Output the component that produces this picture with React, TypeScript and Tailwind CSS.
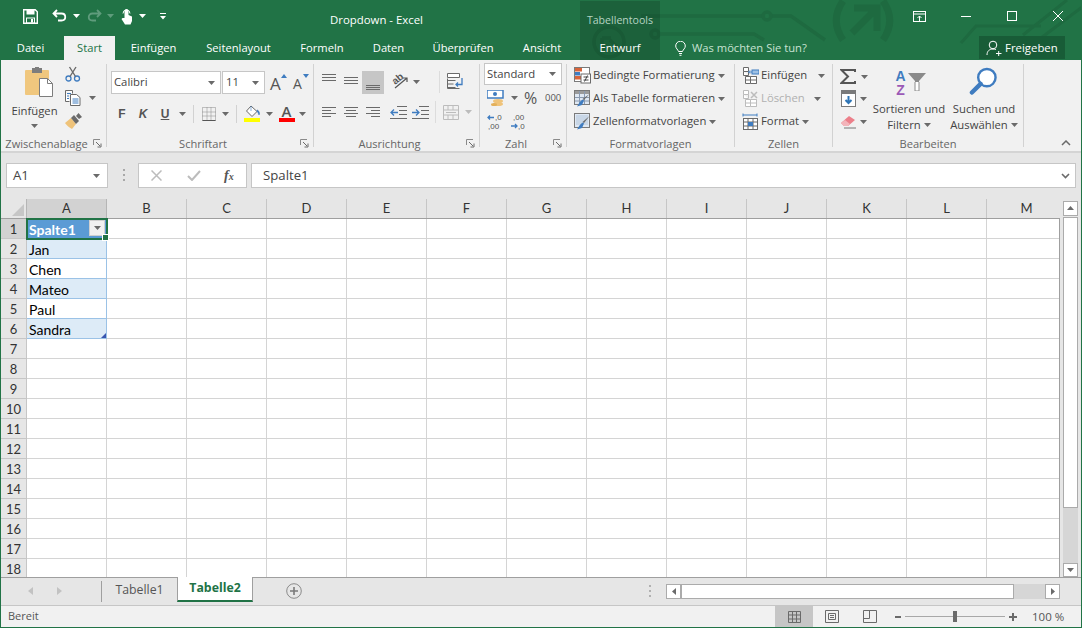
import React from "react";

const Caret = ({ c = "#6a6a6a", className = "" }: { c?: string; className?: string }) => (
  <svg width="7" height="4" viewBox="0 0 7 4" className={"shrink-0 " + className}><path d="M0 0h7L3.5 4z" fill={c} /></svg>
);

const Launcher = () => (
  <svg width="9" height="9" viewBox="0 0 9 9" className="shrink-0">
    <path d="M.5 6V.5H7" fill="none" stroke="#8a8a8a" />
    <path d="M3 3l4 4M8 4.5V8H4.5" fill="none" stroke="#6a6a6a" />
  </svg>
);

const Lines = ({ rows }: { rows: [number, number, number][] }) => (
  <svg width="14" height="14" viewBox="0 0 14 14" className="shrink-0">
    {rows.map(([x, y, l], i) => (
      <rect key={i} x={x} y={y} width={l} height="1" fill="#6a6a6a" />
    ))}
  </svg>
);

function Group({ w, label, launcher, children }: { w: string; label: string; launcher?: boolean; children: React.ReactNode }) {
  return (
    <div className={w + " shrink-0 h-full flex flex-col border-r border-[#d2d2d2]"}>
      <div className="h-[73px] shrink-0">{children}</div>
      <div className={(launcher ? "pr-[14px] " : "") + "relative h-[11px] pt-[2px] flex items-center justify-center text-[11.1px] leading-none text-[#666] whitespace-nowrap"}>
        {label}
        {launcher && <span className="absolute right-[4px] top-[2px] flex"><Launcher /></span>}
      </div>
    </div>
  );
}

const StyleIcon = ({ kind }: { kind: number }) => (
  <svg width="17" height="17" viewBox="0 0 17 17" className="shrink-0">
    {kind === 0 && (
      <>
        <rect x=".5" y=".5" width="15" height="14" fill="#fff" stroke="#7a7a7a" />
        <rect x="1" y="1" width="7" height="3.5" fill="#d9643a" />
        <rect x="1" y="5" width="5" height="3.5" fill="#3f7cc0" />
        <rect x="1" y="9" width="7" height="3.5" fill="#d9643a" />
        <rect x="7" y="7" width="9.5" height="9" fill="#fff" stroke="#6a6a6a" />
        <path d="M9.5 10h5M9.5 13h5M13.5 8.5l-3 6" stroke="#444" fill="none" />
      </>
    )}
    {kind === 1 && (
      <>
        <rect x=".5" y=".5" width="15" height="14" fill="#dfe8f3" stroke="#7a7a7a" />
        <rect x="1" y="1" width="14" height="3" fill="#9a9a9a" />
        <path d="M5.5 1v13M10.5 1v13M1 7.5h14M1 11h14" stroke="#8a9ab0" />
        <path d="M15.5 4L10 10l-1.5-1z" fill="#6a6a6a" />
        <path d="M9 9.5l1 1-2 4.500-5 1.500c1.500-1.500 2-5 6-7z" fill="#3f7cc0" />
      </>
    )}
    {kind === 2 && (
      <>
        <rect x=".5" y=".5" width="15" height="14" fill="#dfe8f3" stroke="#7a7a7a" />
        <rect x="2" y="2" width="12" height="10" fill="#c8d6e6" />
        <path d="M15.500 3L10 10l-1.500-1z" fill="#6a6a6a" />
        <path d="M9 9.500l1 1-2 4.500-5 1.500c1.500-1.500 2-5 6-7z" fill="#3f7cc0" />
      </>
    )}
  </svg>
);

const CellIcon = ({ kind }: { kind: number }) => {
  const c = kind === 1 ? "#bcbcbc" : "#6a6a6a";
  return (
    <svg width="17" height="17" viewBox="0 0 17 17" className="shrink-0">
      {kind === 2 ? (
        <>
          <path d="M1 .5v3M15 .5v3M1 2h14" stroke="#3f7cc0" fill="none" />
          <rect x="1.500" y="5.500" width="14" height="11" fill="#fff" stroke={c} />
          <path d="M6 5.500v11M11 5.500v11M1.500 9h14M1.500 13h14" stroke={c} />
          <rect x="6" y="9" width="5" height="4" fill="#3f7cc0" />
        </>
      ) : (
        <>
          <path d="M1.500.5h5v4h-5zM1.500 4.500v4h5M6.500 4.500v4M3.500 9.500h5v7h-5zM8.500 9.500h6v7h-6M14.500 9.500v7M3.500 13h11" fill="#fff" stroke={c} />
          {kind === 0 ? (
            <>
              <rect x="10" y="3" width="7" height="4" fill="#9dc0e4" stroke="#3f7cc0" />
              <path d="M10 5H6.500M8 3.500L6.500 5 8 6.500" stroke="#3f7cc0" fill="none" />
            </>
          ) : (
            <path d="M9 2l6 6M15 2L9 8" stroke="#bcbcbc" strokeWidth="1.500" />
          )}
        </>
      )}
    </svg>
  );
};

const Decor = () => (
  <svg width="1082" height="60" viewBox="0 0 1082 60" className="absolute left-0 top-0 pointer-events-none">
    <g fill="none" stroke="#1e6a40" strokeWidth="3.500">
      <path d="M640 16h122M770 16h20l34 24M658 34h95l10 6" />
      <circle cx="766" cy="16" r="4" />
      <circle cx="654" cy="34" r="4" />
      <circle cx="608" cy="42" r="15" />
      <path d="M621 52l-12-12M601 38h9M601 38v9" />
    </g>
    <g fill="none" stroke="#1e6a40" strokeWidth="7">
      <path d="M842 1c-9 13-9 26 0 39M882 1c9 13 9 26 0 39" />
      <path d="M851 33l24-24M853 8h23v23" />
    </g>
    <g fill="none" stroke="#1e6a40" strokeWidth="3">
      <path d="M960 43l15-17h65M1022 35l44-35M1040 38l41-31" />
    </g>
  </svg>
);

const cols = ["B", "C", "D", "E", "F", "G", "H", "I", "J", "K", "L", "M"];
const rows = Array.from({ length: 18 }, (_, i) => i + 1);
const names: Record<number, string> = { 2: "Jan", 3: "Chen", 4: "Mateo", 5: "Paul", 6: "Sandra" };

function CellA({ r }: { r: number }) {
  if (r === 1) {
    return (
      <div className="relative z-10 w-[80px] h-[20px] shrink-0 bg-[#5b9bd5] text-white font-bold pl-[2px] pt-[1px] flex items-center border-r border-b border-[#9bc2e6]">
        Spalte1
        <span className="absolute right-[1px] top-[1px] w-[16px] h-[16px] bg-[#f1f1f1] border border-[#d0d0d0] flex items-center justify-center"><Caret /></span>
        <span className="absolute left-[-1px] top-[-1px] w-[82px] h-[22px] border-2 border-[#217346]" />
        <span className="absolute right-[-3px] bottom-[-3px] w-[5px] h-[5px] bg-[#217346] border border-white box-content" />
      </div>
    );
  }
  if (names[r]) {
    const band = r % 2 === 0;
    return (
      <div className={(band ? "bg-[#ddebf7] " : "bg-white ") + "relative w-[80px] h-[20px] shrink-0 pl-[2px] pt-[1px] flex items-center border-r border-b border-[#9bc2e6] text-black"}>
        {names[r]}
        {r === 6 && <svg width="5" height="5" viewBox="0 0 5 5" className="absolute right-0 bottom-0"><path d="M5 0v5H0z" fill="#3a56b0" /></svg>}
      </div>
    );
  }
  return <div className="w-[80px] h-[20px] shrink-0 bg-white border-r border-b border-[#d4d4d4]" />;
}

export default function App() {
  return (
    <div className="relative w-[1082px] h-[628px] overflow-hidden flex flex-col border-l border-r border-b border-[#217346] bg-[#e6e6e6] font-['Open_Sans',sans-serif] text-[#444] text-[11.3px]">
      {/* Title + tabs */}
      <div className="relative h-[60px] shrink-0 bg-[#217346] text-white">
        <Decor />
        <div className="relative h-[36px] flex">
          <div className="w-[329px] shrink-0 flex items-center h-[32px]">
            <svg width="15" height="15" viewBox="0 0 15 15" className="ml-[22px]">
              <path d="M.7.7h11.500l2.100 2.100v11.500H.7z" fill="none" stroke="#fff" strokeWidth="1.400" />
              <rect x="3.500" y="1" width="8" height="4.500" fill="#fff" />
              <rect x="3.500" y="9" width="8" height="5" fill="none" stroke="#fff" />
              <rect x="8" y="10" width="2" height="3.500" fill="#fff" />
            </svg>
            <svg width="15" height="14" viewBox="0 0 15 14" className="ml-[14px]">
              <path d="M5 1L1.500 4.500 5 8M2 4.500h7.500c5 0 5 7 0 7H6" fill="none" stroke="#fff" strokeWidth="1.800" />
            </svg>
            <Caret c="#fff" className="ml-[6px]" />
            <svg width="15" height="14" viewBox="0 0 15 14" className="ml-[7px]">
              <path d="M10 1l3.500 3.500L10 8M13 4.500H5.500c-5 0-5 7 0 7H9" fill="none" stroke="#5f9c7c" strokeWidth="1.800" />
            </svg>
            <Caret c="#5f9c7c" className="ml-[5px]" />
            <svg width="14" height="17" viewBox="0 0 14 17" className="ml-[6px]">
              <path d="M4.500 10V3a2 2 0 0 1 4 0v4l3.500 1.500V13l-1.500 3.500H5L1.500 11l1-1z" fill="#fff" />
              <path d="M3 5.500a3.500 3.500 0 1 1 7 0" fill="none" stroke="#fff" />
            </svg>
            <Caret c="#fff" className="ml-[5px]" />
            <svg width="6" height="7" viewBox="0 0 6 7" className="ml-[14px]"><path d="M0 0h6v1H0zM0 3h6L3 6.500z" fill="#fff" /></svg>
          </div>
          <div className="w-[250px] shrink-0 flex items-center h-[40px] text-[11.4px] whitespace-nowrap">Dropdown - Excel</div>
          <div className="w-[80px] mt-[1px] h-[35px] shrink-0 bg-black/15 flex items-center justify-center text-[10.6px] pt-[4px] text-[#b5d3c2]">Tabellentools</div>
          <div className="flex-1 flex items-start h-[32px]">
            <svg width="13" height="11" viewBox="0 0 13 11" className="ml-[253px] mt-[11px]">
              <rect x=".5" y=".5" width="12" height="10" fill="none" stroke="#fff" />
              <path d="M0 3h13M6.500 10V5M4.500 7l2-2 2 2" stroke="#fff" fill="none" />
            </svg>
            <div className="ml-[35px] mt-[16px] w-[10px] h-[1px] bg-white" />
            <div className="ml-[36px] mt-[11px] w-[10px] h-[10px] border border-white" />
            <svg width="10" height="10" viewBox="0 0 10 10" className="ml-[36px] mt-[11px]"><path d="M0 0l10 10M10 0L0 10" stroke="#fff" /></svg>
          </div>
        </div>
        <div className="relative h-[24px] flex items-center text-[11.2px] whitespace-nowrap">
          <div className="ml-[16px] w-[27px] flex justify-center">Datei</div>
          <div className="ml-[20px] w-[51px] h-full bg-[#f1f1f1] text-[#217346] flex items-center justify-center">Start</div>
          <div className="ml-[15px] w-[47px] flex justify-center">Einfügen</div>
          <div className="ml-[29px] w-[65px] flex justify-center">Seitenlayout</div>
          <div className="ml-[29px] w-[44px] flex justify-center">Formeln</div>
          <div className="ml-[29px] w-[31px] flex justify-center">Daten</div>
          <div className="ml-[29px] w-[60px] flex justify-center">Überprüfen</div>
          <div className="ml-[29px] w-[40px] flex justify-center">Ansicht</div>
          <div className="ml-[18px] w-[80px] h-full bg-black/15 flex items-center justify-center">Entwurf</div>
          <svg width="11" height="15" viewBox="0 0 11 15" className="ml-[15px] shrink-0">
            <path d="M3.500 10.500C3 8.500.7 7.500.7 5a4.800 4.800 0 0 1 9.600 0c0 2.500-2.300 3.500-2.800 5.500zM4 12.500h3M4.500 14.300h2" fill="none" stroke="#fff" />
          </svg>
          <div className="ml-[6px] w-[117px] shrink-0 text-[#c8e2d3]">Was möchten Sie tun?</div>
          <div className="ml-[170px] w-[86px] h-[23px] -mt-[1px] shrink-0 bg-[#185c37] flex items-center text-[11.4px]">
            <svg width="16" height="16" viewBox="0 0 16 16" className="ml-[7px] shrink-0">
              <circle cx="7" cy="5" r="3.800" fill="none" stroke="#fff" />
              <path d="M1 15c0-4 2.500-6 6-6 1 0 2 .2 2.800.6M10 13.500h5.500M12.700 11v5.500" fill="none" stroke="#fff" />
            </svg>
            <span className="ml-[3px]">Freigeben</span>
          </div>
        </div>
      </div>

      {/* Ribbon */}
      <div className="relative h-[93px] shrink-0 bg-[#f1f1f1] border-b-2 border-[#d4d4d4] flex pt-[4px] pb-[4px]">
        <Group w="w-[106px]" label="Zwischenablage" launcher>
          <div className="flex">
            <div className="ml-[3px] w-[61px] shrink-0 flex flex-col items-center">
              <svg width="29" height="31" viewBox="0 0 29 31" className="mt-[3px] ml-[9px]">
                <rect x="0" y="3" width="24" height="25" rx="1" fill="#f0c77e" />
                <rect x="7" y="1" width="10" height="5" fill="#7d7d7d" />
                <rect x="10" y="0" width="4" height="3" fill="#7d7d7d" />
                <path d="M14.500 11.500h8l5 5v13h-13z" fill="#fff" stroke="#7d7d7d" />
                <path d="M22.500 11.500v5h5" fill="none" stroke="#7d7d7d" />
              </svg>
              <div className="mt-[5px] leading-[16px]">Einfügen</div>
              <Caret className="mt-[5px]" />
            </div>
            <div className="flex flex-col">
              <svg width="16" height="16" viewBox="0 0 16 16" className="mt-[2px]">
                <circle cx="3.500" cy="12.500" r="2.500" fill="none" stroke="#3f7cc0" strokeWidth="1.300" />
                <circle cx="12" cy="12.500" r="2.500" fill="none" stroke="#3f7cc0" strokeWidth="1.300" />
                <path d="M5 10.500L11 1M10.500 10.500L4.500 1" stroke="#6a6a6a" strokeWidth="1.400" />
              </svg>
              <div className="flex items-center mt-[8px]">
                <svg width="16" height="16" viewBox="0 0 16 16">
                  <path d="M.5.500h7v3M.5.500v11h4" fill="#fff" stroke="#6a6a6a" />
                  <path d="M5.500 4.500h6l3.500 3v8H5.500z" fill="#fff" stroke="#6a6a6a" />
                  <path d="M2 3.500h4M2 6h2M2 8.500h2M7.500 9h6M7.500 11h6M7.500 13h6" stroke="#3f7cc0" />
                </svg>
                <Caret className="ml-[8px]" />
              </div>
              <svg width="17" height="16" viewBox="0 0 17 16" className="mt-[7px]">
                <path d="M0 10l6-5 5 6-4 5c-2-1-5-3-7-6z" fill="#efc37a" />
                <path d="M6 5l3-3 5 6-3 3z" fill="#6a6a6a" />
                <path d="M11 3l2.500-3L17 4l-3 2z" fill="#6a6a6a" />
              </svg>
            </div>
          </div>
        </Group>

        <Group w="w-[207px]" label="Schriftart" launcher>
          <div className="pt-[7px] pl-[4px] flex items-center">
            <div className="w-[110px] h-[23px] bg-white border border-[#c6c6c6] flex items-center justify-between pl-[2px] pr-[5px]">
              <span>Calibri</span><Caret />
            </div>
            <div className="ml-[1px] w-[43px] h-[23px] bg-white border border-[#c6c6c6] flex items-center justify-between pl-[3px] pr-[5px]">
              <span>11</span><Caret />
            </div>
            <div className="ml-[5px] relative w-[16px] h-[20px] flex items-end text-[17px] leading-[18px] text-[#555]">A
              <svg width="6" height="4" viewBox="0 0 6 4" className="absolute right-[-1px] top-[1px]"><path d="M0 4l3-4 3 4z" fill="#3f7cc0" /></svg>
            </div>
            <div className="ml-[7px] relative w-[14px] h-[20px] flex items-end text-[14px] leading-[18px] text-[#555]">A
              <svg width="6" height="4" viewBox="0 0 6 4" className="absolute right-[-2px] top-[1px]"><path d="M0 0h6L3 4z" fill="#3f7cc0" /></svg>
            </div>
          </div>
          <div className="mt-[9px] pl-[7px] h-[21px] flex items-center text-[#555]">
            <span className="w-[16px] text-center text-[12px] font-bold font-['Liberation_Sans',sans-serif]">F</span>
            <span className="ml-[5px] w-[16px] text-center text-[12px] font-bold italic font-['Liberation_Sans',sans-serif]">K</span>
            <span className="ml-[6px] w-[16px] text-center text-[12px] font-bold underline font-['Liberation_Sans',sans-serif]">U</span>
            <Caret className="ml-[6px]" />
            <div className="ml-[7px] w-[1px] h-[18px] bg-[#d2d2d2]" />
            <svg width="14" height="14" viewBox="0 0 14 14" className="ml-[8px]">
              <path d="M.5.500h13v13H.5zM5 .500v13M9 .500v13M.5 5h13M.5 9h13" fill="none" stroke="#8a8a8a" strokeDasharray="1 1" />
              <path d="M.5 13.500h13" stroke="#555" />
            </svg>
            <Caret className="ml-[6px]" />
            <div className="ml-[7px] w-[1px] h-[18px] bg-[#d2d2d2]" />
            <svg width="17" height="17" viewBox="0 0 17 17" className="ml-[7px]">
              <path d="M7 1l6 5.500-5 5-5.500-5.500z" fill="#fff" stroke="#6a6a6a" />
              <path d="M7 1v5M13 5c1 0 2.500 1.500 2.500 4 0 1-1 1-1 0 0-1-1-2-1.500-2.500z" fill="#3f7cc0" stroke="#3f7cc0" strokeWidth=".6" />
              <rect x="0" y="13" width="16" height="4" fill="#ffff00" />
            </svg>
            <Caret className="ml-[5px]" />
            <div className="ml-[5px] w-[17px] h-[17px] flex flex-col items-center">
              <span className="text-[15px] leading-[13px] text-[#555] font-semibold">A</span>
              <span className="w-[16px] h-[4px] bg-[#ff0000]" />
            </div>
            <Caret className="ml-[4px]" />
          </div>
        </Group>

        <Group w="w-[166px]" label="Ausrichtung" launcher>
          <div className="pt-[7px] pl-[8px] flex items-start">
            <Lines rows={[[0, 3, 14], [0, 6, 14], [0, 9, 14]]} />
            <div className="ml-[8px]"><Lines rows={[[0, 6, 14], [0, 9, 14], [0, 12, 14]]} /></div>
            <div className="ml-[4px] w-[22px] h-[23px] bg-[#c6c6c6] flex justify-center items-end pb-[3px]"><Lines rows={[[0, 8, 14], [0, 10, 14], [0, 12, 14]]} /></div>
            <svg width="20" height="19" viewBox="0 0 20 19" className="ml-[6px] mt-[1px] overflow-visible">
              <text x="3" y="11" transform="rotate(-40 7 9)" fontSize="10" fontWeight="700" fill="#555" fontFamily="Liberation Sans, sans-serif">ab</text>
              <path d="M5 16L17 6M13 6h4v4" fill="none" stroke="#555" strokeWidth="1.200" />
            </svg>
            <Caret className="ml-[3px] mt-[9px]" />
            <div className="ml-[19px] w-[1px] h-[22px] bg-[#dcdcdc]" />
            <svg width="18" height="18" viewBox="0 0 18 18" className="ml-[7px] mt-[2px]">
              <path d="M.5.500h12v4H.5z" fill="#fff" stroke="#6a6a6a" />
              <path d="M.5 7.500h8M.5 11h6M.5 14.500h8" stroke="#6a6a6a" />
              <path d="M.5 5.500v10h12" fill="none" stroke="#6a6a6a" />
              <path d="M15 5v6.500H9M11 9.500l-2 2 2 2" fill="none" stroke="#3f7cc0" strokeWidth="1.300" />
            </svg>
          </div>
          <div className="mt-[9px] pl-[8px] flex items-center h-[18px]">
            <Lines rows={[[0, 2, 14], [0, 5, 9], [0, 8, 14], [0, 11, 9]]} />
            <div className="ml-[8px]"><Lines rows={[[0, 2, 14], [2, 5, 10], [0, 8, 14], [2, 11, 10]]} /></div>
            <div className="ml-[8px]"><Lines rows={[[0, 2, 14], [5, 5, 9], [0, 8, 14], [5, 11, 9]]} /></div>
            <svg width="17" height="13" viewBox="0 0 17 13" className="ml-[10px]">
              <path d="M7 .5h10M9 4.500h8M9 8.500h8M0 12.500h17" stroke="#6a6a6a" />
              <path d="M8 6.500H1M4 3.500L1 6.500l3 3" fill="none" stroke="#3f7cc0" strokeWidth="1.300" />
            </svg>
            <svg width="17" height="13" viewBox="0 0 17 13" className="ml-[5px]">
              <path d="M7 .5h10M9 4.500h8M9 8.500h8M0 12.500h17" stroke="#6a6a6a" />
              <path d="M0 6.500h7M4 3.500l3 3-3 3" fill="none" stroke="#3f7cc0" strokeWidth="1.300" />
            </svg>
            <div className="ml-[6px] w-[1px] h-[22px] bg-[#dcdcdc]" />
            <svg width="16" height="15" viewBox="0 0 16 15" className="ml-[7px]">
              <path d="M.5.500h15v14H.5zM.5 5h15M.5 10h15M5 .5V5M10 .5V5M5 10v4.500M10 10v4.500M3 7.500h10" fill="none" stroke="#bcbcbc" />
            </svg>
            <Caret c="#bcbcbc" className="ml-[6px]" />
          </div>
        </Group>

        <Group w="w-[87px]" label="Zahl" launcher>
          <div className="pl-[4px] -mt-[1px]">
            <div className="w-[78px] h-[22px] bg-white border border-[#c6c6c6] flex items-center justify-between pl-[2px] pr-[5px]"><span>Standard</span><Caret /></div>
            <div className="mt-[3px] h-[20px] flex items-center pl-[3px]">
              <svg width="17" height="17" viewBox="0 0 17 17" className="shrink-0">
                <rect x="0" y="0" width="16" height="8" fill="#fff" stroke="#3f7cc0" strokeWidth="1.500" />
                <circle cx="8" cy="4" r="2" fill="#3f7cc0" />
                <ellipse cx="11" cy="11" rx="5" ry="2" fill="#efc37a" />
                <ellipse cx="11" cy="14" rx="5" ry="2" fill="#efc37a" />
                <ellipse cx="7" cy="14.500" rx="3" ry="1.500" fill="#e3b05b" />
              </svg>
              <Caret className="ml-[7px]" />
              <span className="ml-[6px] text-[16px] leading-none text-[#555] w-[15px]">%</span>
              <span className="ml-[6px] text-[9.5px] leading-none text-[#555]">000</span>
            </div>
            <div className="mt-[5px] h-[17px] flex items-center pl-[3px]">
              <svg width="16" height="17" viewBox="0 0 16 17" className="shrink-0">
                <path d="M7 4.500H1M3 2.500l-2 2 2 2" fill="none" stroke="#3f7cc0" strokeWidth="1.300" />
                <text x="8" y="7" fontSize="8" fill="#555" fontFamily="Liberation Sans, sans-serif">,0</text>
                <text x="1" y="16" fontSize="8" fill="#555" fontFamily="Liberation Sans, sans-serif">,00</text>
              </svg>
              <svg width="16" height="17" viewBox="0 0 16 17" className="ml-[7px] shrink-0">
                <text x="3" y="7" fontSize="8" fill="#555" fontFamily="Liberation Sans, sans-serif">,00</text>
                <path d="M1 13h6M5 11l2 2-2 2" fill="none" stroke="#3f7cc0" strokeWidth="1.300" />
                <text x="8" y="16" fontSize="8" fill="#555" fontFamily="Liberation Sans, sans-serif">,0</text>
              </svg>
            </div>
          </div>
        </Group>

        <Group w="w-[168px]" label="Formatvorlagen">
          <div className="pl-[7px] flex flex-col whitespace-nowrap">
            <div className="h-[23px] flex items-center"><StyleIcon kind={0} /><span className="ml-[2px]">Bedingte Formatierung</span><Caret className="ml-[3px]" /></div>
            <div className="h-[23px] flex items-center"><StyleIcon kind={1} /><span className="ml-[2px]">Als Tabelle formatieren</span><Caret className="ml-[3px]" /></div>
            <div className="h-[23px] flex items-center"><StyleIcon kind={2} /><span className="ml-[2px]">Zellenformatvorlagen</span><Caret className="ml-[3px]" /></div>
          </div>
        </Group>

        <Group w="w-[98px]" label="Zellen">
          <div className="pl-[7px] flex flex-col whitespace-nowrap">
            <div className="h-[23px] flex items-center"><CellIcon kind={0} /><span className="ml-[2px]">Einfügen</span><Caret className="ml-[11px]" /></div>
            <div className="h-[23px] flex items-center text-[#b0b0b0]"><CellIcon kind={1} /><span className="ml-[2px]">Löschen</span><Caret className="ml-[9px]" /></div>
            <div className="h-[23px] flex items-center"><CellIcon kind={2} /><span className="ml-[2px]">Format</span><Caret className="ml-[3px]" /></div>
          </div>
        </Group>

        <Group w="w-[191px]" label="Bearbeiten">
          <div className="flex">
            <div className="w-[37px] shrink-0 pl-[7px] flex flex-col">
              <div className="h-[23px] flex items-center pt-[2px]">
                <svg width="16" height="15" viewBox="0 0 16 15"><path d="M15 3V1H1.500L8 7.500 1.500 14H15v-2" fill="none" stroke="#555" strokeWidth="2" /></svg>
                <Caret className="ml-[5px]" />
              </div>
              <div className="h-[23px] flex items-center pl-[1px]">
                <svg width="15" height="17" viewBox="0 0 15 17">
                  <rect x=".5" y=".5" width="14" height="16" fill="#fff" stroke="#7a7a7a" />
                  <rect x="1" y="1" width="13" height="3" fill="#7a7a7a" />
                  <path d="M7.500 6v7M4.500 10l3 3 3-3" fill="none" stroke="#2e75b6" strokeWidth="2" />
                </svg>
                <Caret className="ml-[4px]" />
              </div>
              <div className="h-[23px] flex items-center pl-[1px]">
                <svg width="15" height="15" viewBox="0 0 15 15">
                  <path d="M0 9l8-7 6 4-7 6H3z" fill="#ec7f8a" />
                  <path d="M0 9l3 3h4l2-2-5-4z" fill="#f3b4ba" />
                  <path d="M3 14h12" stroke="#777" />
                </svg>
                <Caret className="ml-[4px]" />
              </div>
            </div>
            <div className="w-[78px] shrink-0 flex flex-col items-center whitespace-nowrap leading-[16px]">
              <div className="h-[37px] w-full pt-[5px] flex justify-center">
                <div className="flex pl-[1px]">
                  <div className="flex flex-col w-[15px] font-bold text-[14px] leading-[14px] font-['Liberation_Sans',sans-serif] items-center">
                    <span className="text-[#3f7cc0]">A</span>
                    <span className="text-[#9b59b6]">Z</span>
                  </div>
                  <svg width="18" height="18" viewBox="0 0 18 18" className="mt-[4px]"><path d="M0 0h18l-7 8v10H7V8z" fill="#8a8a8a" /><path d="M7 9v9h4V9" fill="#fff" stroke="#8a8a8a" /></svg>
                </div>
              </div>
              <div>Sortieren und</div>
              <div className="flex items-center">Filtern<Caret className="ml-[3px]" /></div>
            </div>
            <div className="w-[72px] shrink-0 flex flex-col items-center whitespace-nowrap leading-[16px]">
              <div className="h-[37px] w-full pt-[3px] flex justify-center">
                <svg width="29" height="28" viewBox="0 0 29 29" className="-ml-[1px]">
                  <circle cx="18" cy="11" r="9" fill="#fff" stroke="#3f7cc0" strokeWidth="2.500" />
                  <path d="M11.500 17.500L2.500 26.500" stroke="#3f7cc0" strokeWidth="4.500" strokeLinecap="round" />
                </svg>
              </div>
              <div>Suchen und</div>
              <div className="flex items-center">Auswählen<Caret className="ml-[3px]" /></div>
            </div>
          </div>
        </Group>

        <div className="flex-1 flex items-end justify-end pr-[10px] pb-[1px]">
          <svg width="10" height="6" viewBox="0 0 10 6"><path d="M1 5l4-4 4 4" fill="none" stroke="#6a6a6a" strokeWidth="1.500" /></svg>
        </div>
      </div>

      {/* Formula bar */}
      <div className="h-[46px] shrink-0 flex items-start pt-[10px] text-[13.2px]">
        <div className="ml-[5px] w-[102px] h-[25px] bg-white border border-[#c6c6c6] flex items-center justify-between pl-[6px] pr-[7px]">
          <span>A1</span><Caret />
        </div>
        <div className="ml-[15px] mt-[6px] flex flex-col gap-[3px]">
          <span className="w-[2px] h-[2px] bg-[#a8a8a8]" />
          <span className="w-[2px] h-[2px] bg-[#a8a8a8]" />
          <span className="w-[2px] h-[2px] bg-[#a8a8a8]" />
        </div>
        <div className="ml-[13px] w-[109px] h-[25px] bg-white border border-[#c6c6c6] flex items-center">
          <svg width="11" height="11" viewBox="0 0 11 11" className="ml-[12px]"><path d="M.5.500l10 10M10.500.500l-10 10" stroke="#bcbcbc" strokeWidth="1.500" /></svg>
          <svg width="14" height="11" viewBox="0 0 14 11" className="ml-[25px]"><path d="M1 6l4 4 8-9" fill="none" stroke="#bcbcbc" strokeWidth="2" /></svg>
          <span className="ml-[23px] text-[14px] font-bold italic font-['Liberation_Serif',serif] text-[#555]">f<span className="text-[10px]">x</span></span>
        </div>
        <div className="ml-[4px] w-[825px] h-[25px] bg-white border border-[#c6c6c6] flex items-center justify-between pl-[11px] pr-[5px]">
          <span>Spalte1</span>
          <svg width="9" height="6" viewBox="0 0 9 6"><path d="M1 1l3.500 3.500L8 1" fill="none" stroke="#6a6a6a" strokeWidth="1.600" /></svg>
        </div>
      </div>

      {/* Grid + vertical scrollbar */}
      <div className="h-[379px] shrink-0 flex border-b border-[#9f9f9f] overflow-hidden">
        <div className="w-[1058px] shrink-0 overflow-hidden font-['Lato',sans-serif] text-[14px]">
          <div className="flex h-[20px] border-b border-[#9f9f9f] text-[#333] text-[13px]">
            <div className="w-[26px] shrink-0 relative border-r border-[#b5b5b5]">
              <svg width="12" height="12" viewBox="0 0 12 12" className="absolute right-[2px] bottom-[2px]"><path d="M12 0v12H0z" fill="#c6c6c6" /></svg>
            </div>
            <div className="w-[80px] shrink-0 bg-[#d2d2d2] border-r border-[#b5b5b5] pt-[1px] flex items-center justify-center">A</div>
            {cols.map((c) => (
              <div key={c} className="w-[80px] shrink-0 border-r border-[#c6c6c6] pt-[1px] flex items-center justify-center">{c}</div>
            ))}
          </div>
          {rows.map((r) => (
            <div key={r} className="flex h-[20px]">
              <div className={(r === 1 ? "bg-[#d2d2d2] " : "") + "w-[26px] shrink-0 border-r border-b border-[#c6c6c6] pt-[2px] flex items-center justify-center text-[#333] text-[13px]"}>{r}</div>
              <CellA r={r} />
              {cols.map((c) => (
                <div key={c} className="w-[80px] h-[20px] shrink-0 bg-white border-r border-b border-[#d4d4d4]" />
              ))}
            </div>
          ))}
        </div>
        <div className="flex-1 flex">
          <div className="w-[1px] mt-[19px] bg-[#9f9f9f]" />
          <div className="ml-[3px] mt-[2px] w-[15px] flex flex-col">
            <div className="h-[15px] bg-white border border-[#ababab] flex items-center justify-center"><svg width="7" height="4" viewBox="0 0 7 4"><path d="M0 4h7L3.500 0z" fill="#6a6a6a" /></svg></div>
            <div className="mt-[1px] h-[292px] bg-white border border-[#ababab]" />
            <div className="h-[55px] bg-[#d6d6d6]" />
            <div className="h-[14px] bg-white border border-[#ababab] flex items-center justify-center"><Caret /></div>
          </div>
        </div>
      </div>

      {/* Sheet tabs */}
      <div className="h-[27px] shrink-0 flex items-start text-[12.3px] whitespace-nowrap">
        <svg width="5" height="8" viewBox="0 0 5 8" className="ml-[27px] mt-[9px]"><path d="M5 0v8L0 4z" fill="#c2c2c2" /></svg>
        <svg width="5" height="8" viewBox="0 0 5 8" className="ml-[24px] mt-[9px]"><path d="M0 0v8l5-4z" fill="#c2c2c2" /></svg>
        <div className="ml-[39px] mt-[3px] w-[1px] h-[21px] bg-[#9f9f9f]" />
        <div className="w-[75px] h-[24px] flex items-center justify-center text-[#555]">Tabelle1</div>
        <div className="w-[76px] h-[25px] -mt-[1px] bg-white border-l border-r border-[#9f9f9f] border-b-2 border-b-[#217346] text-[#217346] font-bold flex items-center justify-center">Tabelle2</div>
        <svg width="16" height="16" viewBox="0 0 16 16" className="ml-[33px] mt-[5px]">
          <circle cx="8" cy="8" r="7.300" fill="none" stroke="#8a8a8a" />
          <path d="M4 8h8M8 4v8" stroke="#7a7a7a" strokeWidth="1.600" />
        </svg>
        <div className="ml-[347px] mt-[7px] flex flex-col gap-[3px]">
          <span className="w-[2px] h-[2px] bg-[#b0b0b0]" />
          <span className="w-[2px] h-[2px] bg-[#b0b0b0]" />
          <span className="w-[2px] h-[2px] bg-[#b0b0b0]" />
        </div>
        <div className="ml-[15px] mt-[6px] flex h-[15px]">
          <div className="w-[15px] bg-white border border-[#ababab] flex items-center justify-center"><svg width="4" height="7" viewBox="0 0 4 7"><path d="M4 0v7L0 3.500z" fill="#6a6a6a" /></svg></div>
          <div className="w-[333px] bg-white border border-[#ababab]" />
          <div className="w-[31px] bg-[#d6d6d6]" />
          <div className="w-[15px] bg-white border border-[#ababab] flex items-center justify-center"><svg width="4" height="7" viewBox="0 0 4 7"><path d="M0 0v7l4-3.500z" fill="#6a6a6a" /></svg></div>
        </div>
      </div>

      {/* Status bar */}
      <div className="flex-1 bg-[#f1f1f1] border-t border-[#c6c6c6] flex items-center text-[11px] text-[#555]">
        <span className="ml-[7px] w-[767px]">Bereit</span>
        <div className="w-[38px] h-full bg-[#c6c6c6] flex items-center justify-center">
          <svg width="13" height="12" viewBox="0 0 13 12"><path d="M.5.500h12v11H.5zM4.500.500v11M8.500.500v11M.5 4h12M.5 8h12" fill="none" stroke="#6a6a6a" /></svg>
        </div>
        <div className="w-[38px] flex items-center justify-center">
          <svg width="14" height="13" viewBox="0 0 14 13"><path d="M.5.500h13v12H.5z" fill="none" stroke="#6a6a6a" /><path d="M3.500 3.500h7v6h-7zM5 5.500h4M5 7.500h4" fill="none" stroke="#6a6a6a" /></svg>
        </div>
        <div className="w-[38px] flex items-center justify-center">
          <svg width="14" height="13" viewBox="0 0 14 13"><path d="M.5.500h13v12H.5zM.5 8.500h6v-8M6.500 8.500" fill="none" stroke="#6a6a6a" /></svg>
        </div>
        <div className="ml-[6px] w-[6px] h-[2px] bg-[#6a6a6a]" />
        <div className="relative ml-[4px] w-[100px] h-[1px] bg-[#a8a8a8]">
          <span className="absolute left-[48px] top-[-5px] w-[4px] h-[11px] bg-[#6a6a6a]" />
        </div>
        <svg width="8" height="8" viewBox="0 0 8 8" className="ml-[4px]"><path d="M0 4h8M4 0v8" stroke="#6a6a6a" strokeWidth="2" /></svg>
        <span className="ml-[15px] text-[11.500px] whitespace-nowrap">100 %</span>
      </div>
    </div>
  );
}
